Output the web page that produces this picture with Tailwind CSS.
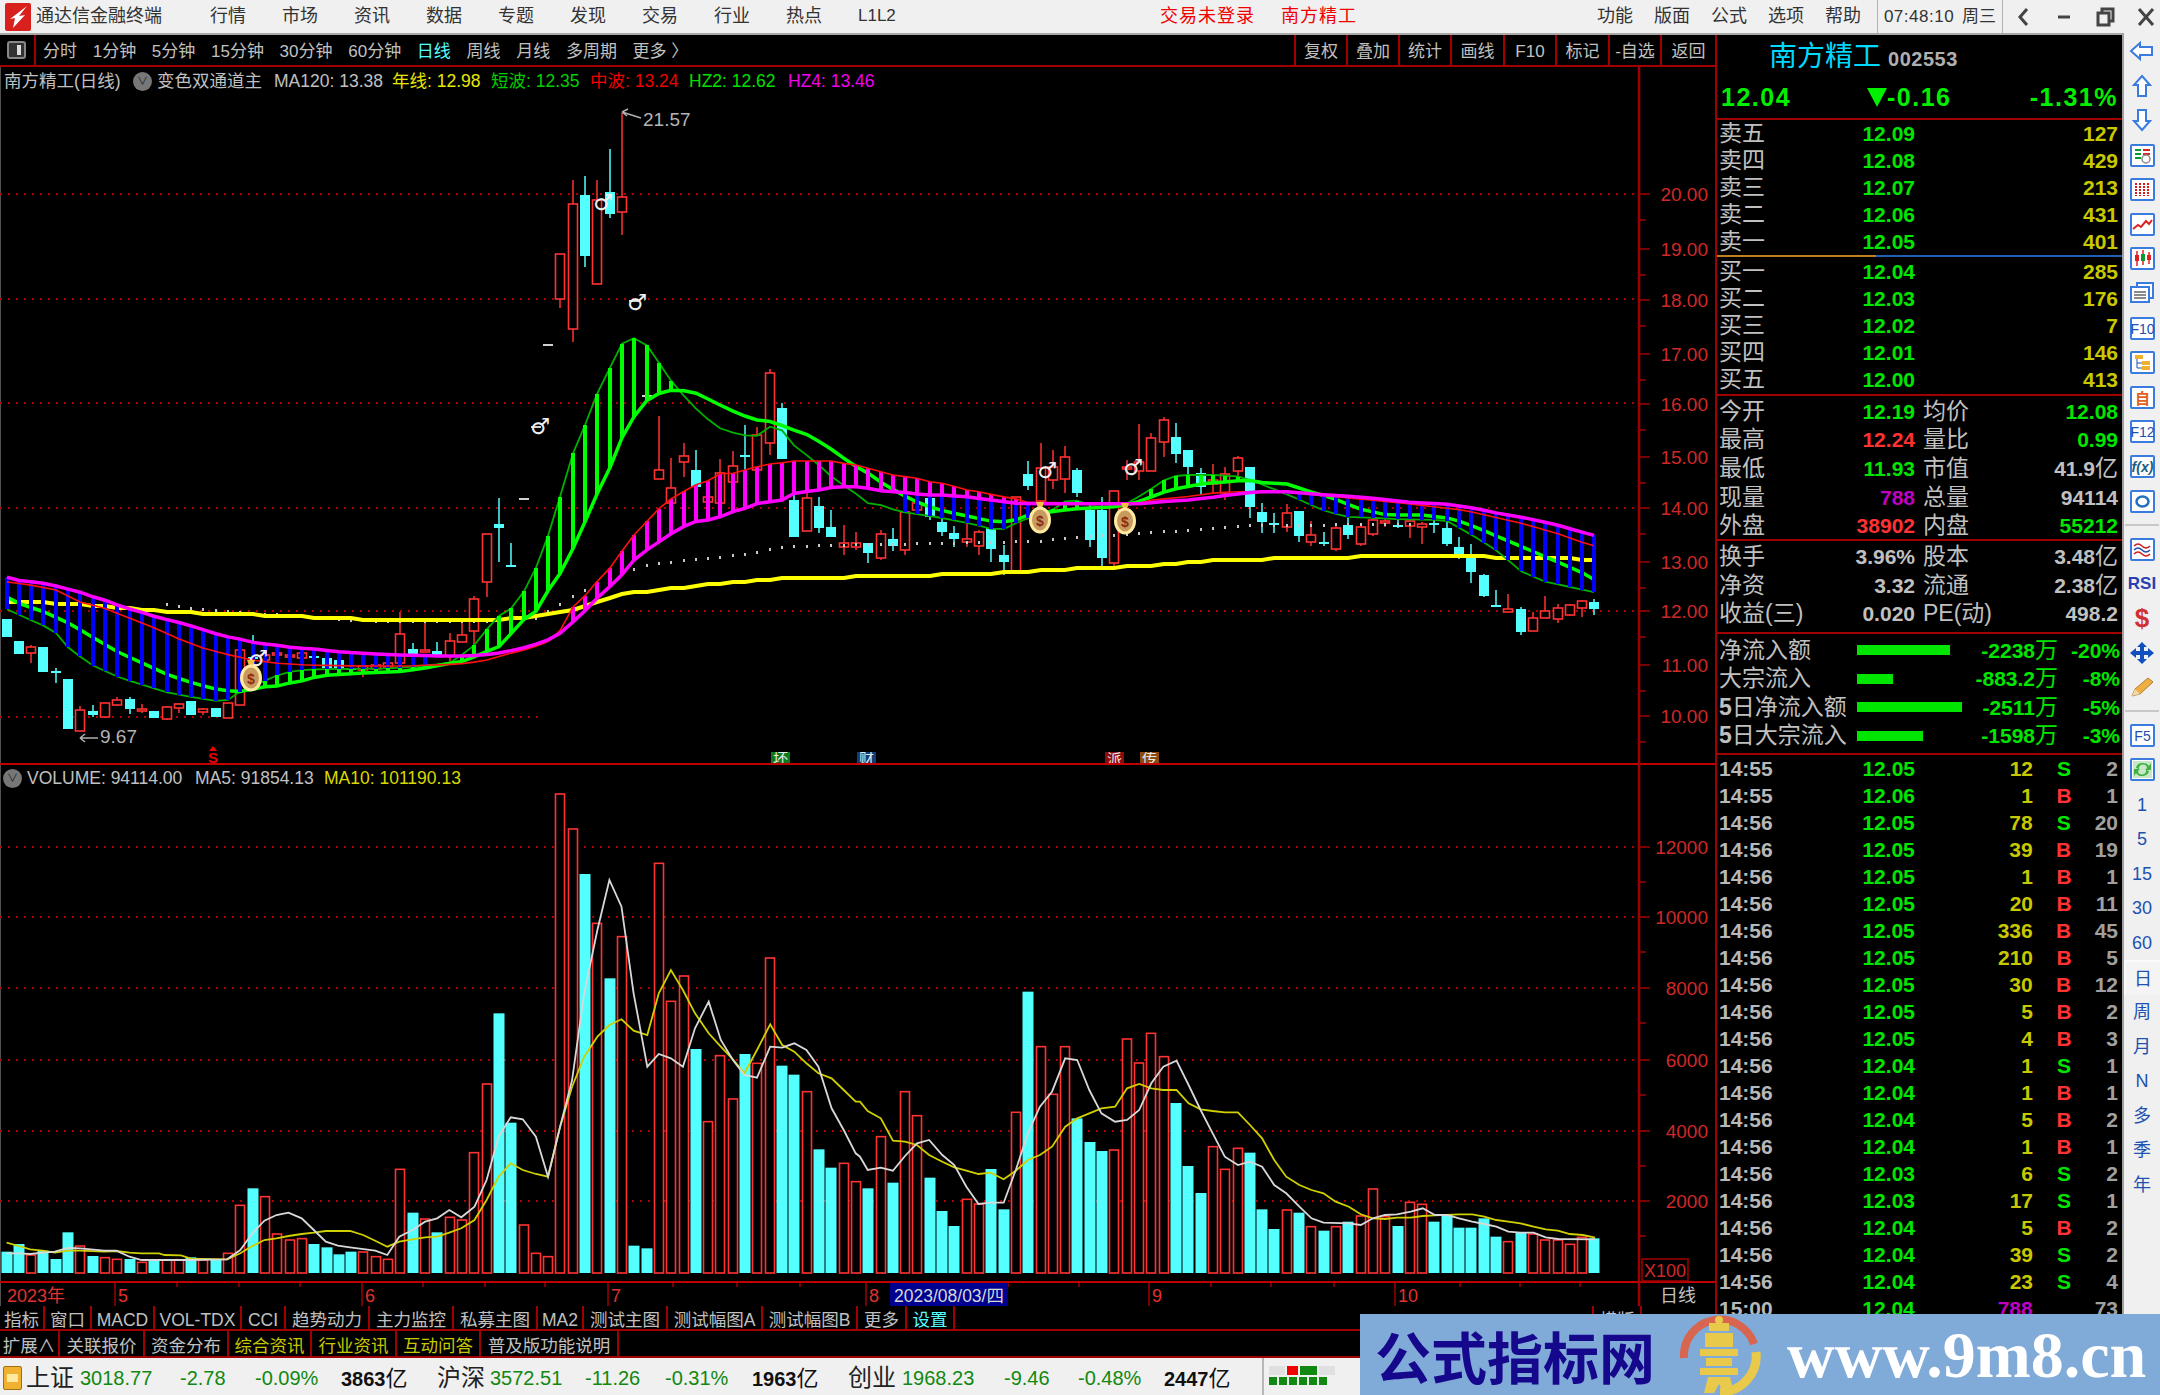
<!DOCTYPE html>
<html lang="zh-CN">
<head>
<meta charset="UTF-8">
<title>通达信金融终端</title>
<script src="https://cdn.jsdelivr.net/npm/@tailwindcss/browser@4"></script>
</head>
<body class="bg-black overflow-hidden font-['Liberation_Sans','Noto_Sans_CJK_SC',sans-serif]">
<div class="relative w-[2160px] h-[1395px] flex flex-col overflow-hidden">

  <!-- title bar -->
  <div class="h-[35px] shrink-0 bg-[#f0f0f0] border-b-2 border-[#a8a8a8] flex items-center text-[18px] text-[#333] whitespace-nowrap">
    <svg class="ml-[5px] w-[26px] h-[28px] shrink-0" viewBox="0 0 26 28"><rect width="26" height="28" rx="2" fill="#d8201c"/><path d="M22 3 L14 13 L20 12 L8 25 L10 15 L5 16 Z" fill="#fff"/></svg>
    <span class="ml-[5px] w-[174px] shrink-0">通达信金融终端</span>
    <div class="flex gap-[36px] shrink-0">
      <span>行情</span><span>市场</span><span>资讯</span><span>数据</span><span>专题</span><span>发现</span><span>交易</span><span>行业</span><span>热点</span><span class="text-[17px] w-[36px]">L1L2</span>
    </div>
    <span class="ml-[266px] text-[#f00000] w-[121px] shrink-0 tracking-[1px]">交易未登录</span>
    <span class="text-[#f00000] tracking-[1px] shrink-0">南方精工</span>
    <div class="ml-[240px] flex gap-[21px] shrink-0">
      <span>功能</span><span>版面</span><span>公式</span><span>选项</span><span>帮助</span>
    </div>
    <div class="ml-[16px] h-[33px] w-[126px] shrink-0 border-x border-[#b0b0b0] flex items-center justify-center gap-[8px] text-[17px]"><span class="tracking-[0.5px]">07:48:10</span><span>周三</span></div>
    <svg class="ml-[7px] w-[150px] h-[28px] shrink-0" viewBox="0 0 150 28" fill="none" stroke="#444" stroke-width="3"><path d="M17 6 L10 14 L17 22"/><path d="M48 14 H60"/><rect x="88" y="10" width="11" height="12"/><path d="M92 10 V6 H103 V18 H99"/><path d="M129 6 L143 22 M143 6 L129 22"/></svg>
  </div>

  <div class="flex flex-1 min-h-0">
    <!-- chart column -->
    <div class="w-[1715px] shrink-0 flex flex-col bg-black">
      <div class="h-[32px] shrink-0 border-b-2 border-[#a00000] flex items-center text-[17px] text-[#c0c0c0] whitespace-nowrap">
        <div class="w-[36px] h-full border-r-2 border-[#a00000] flex items-center justify-center">
          <svg class="w-[20px] h-[20px]" viewBox="0 0 20 20"><rect x="1" y="2" width="17" height="16" rx="2" fill="#333" stroke="#888" stroke-width="2"/><rect x="10" y="5" width="4" height="10" fill="#ddd"/></svg>
        </div>
        <div class="ml-[7px] pt-[4px] flex gap-[15.7px]">
          <span>分时</span><span>1分钟</span><span>5分钟</span><span>15分钟</span><span>30分钟</span><span>60分钟</span><span class="text-[#54ffff]">日线</span><span>周线</span><span>月线</span><span>多周期</span><span>更多 〉</span>
        </div>
        <div class="ml-auto flex h-full">
          <span class="w-[52px] pt-[4px] border-l-2 border-[#a00000] flex items-center justify-center">复权</span>
          <span class="w-[52px] pt-[4px] border-l-2 border-[#a00000] flex items-center justify-center">叠加</span>
          <span class="w-[52px] pt-[4px] border-l-2 border-[#a00000] flex items-center justify-center">统计</span>
          <span class="w-[53px] pt-[4px] border-l-2 border-[#a00000] flex items-center justify-center">画线</span>
          <span class="w-[52px] pt-[4px] border-l-2 border-[#a00000] flex items-center justify-center">F10</span>
          <span class="w-[53px] pt-[4px] border-l-2 border-[#a00000] flex items-center justify-center">标记</span>
          <span class="w-[52px] pt-[4px] border-l-2 border-[#a00000] flex items-center justify-center">-自选</span>
          <span class="w-[55px] pt-[4px] border-l-2 border-[#a00000] flex items-center justify-center">返回</span>
        </div>
      </div>

      <div class="relative h-[1239px] shrink-0">
        <svg id="chart" class="block absolute left-0 top-0" width="1715" height="1239" viewBox="0 67 1715 1239" font-family="'Liberation Sans','Noto Sans CJK SC',sans-serif"></svg>
        <!-- main pane legend -->
        <div class="absolute left-[4px] top-[3px] flex items-center h-[22px] text-[17.5px] text-[#c0c0c0] whitespace-nowrap">
          <span class="w-[126px]">南方精工(日线)</span>
          <span class="ml-[3px] w-[19px] h-[19px] rounded-full bg-[#777] flex items-center justify-center text-[#222] text-[11px]">∨</span>
          <span class="ml-[5px] w-[110px]">变色双通道主</span>
          <span class="ml-[7px] w-[118px]">MA120: 13.38</span>
          <span class="w-[99px] text-[#e8e800]">年线: 12.98</span>
          <span class="w-[99px] text-[#00d000]">短波: 12.35</span>
          <span class="w-[99px] text-[#f00000]">中波: 13.24</span>
          <span class="w-[99px] text-[#00e000]">HZ2: 12.62</span>
          <span class="text-[#f000f0]">HZ4: 13.46</span>
        </div>
        <!-- volume pane legend -->
        <div class="absolute left-[3px] top-[700px] flex items-center h-[22px] text-[17.5px] text-[#c0c0c0] whitespace-nowrap">
          <span class="w-[19px] h-[19px] rounded-full bg-[#777] flex items-center justify-center text-[#222] text-[11px]">∨</span>
          <span class="ml-[5px] w-[168px]">VOLUME: 94114.00</span>
          <span class="w-[129px]">MA5: 91854.13</span>
          <span class="text-[#d8d800]">MA10: 101190.13</span>
        </div>
      </div>

      <div class="h-[25px] shrink-0 border-b-2 border-[#a00000] flex text-[17.5px] text-[#c0c0c0] leading-none whitespace-nowrap [&>span]:pt-[6px]">
        <span class="w-[45px] border-r-2 border-[#a00000] flex items-center justify-center">指标</span>
        <span class="w-[47px] border-r-2 border-[#a00000] flex items-center justify-center">窗口</span>
        <span class="w-[63px] border-r-2 border-[#a00000] flex items-center justify-center">MACD</span>
        <span class="w-[87px] border-r-2 border-[#a00000] flex items-center justify-center">VOL-TDX</span>
        <span class="w-[44px] border-r-2 border-[#a00000] flex items-center justify-center">CCI</span>
        <span class="w-[84px] border-r-2 border-[#a00000] flex items-center justify-center">趋势动力</span>
        <span class="w-[84px] border-r-2 border-[#a00000] flex items-center justify-center">主力监控</span>
        <span class="w-[84px] border-r-2 border-[#a00000] flex items-center justify-center">私募主图</span>
        <span class="w-[46px] border-r-2 border-[#a00000] flex items-center justify-center">MA2</span>
        <span class="w-[84px] border-r-2 border-[#a00000] flex items-center justify-center">测试主图</span>
        <span class="w-[95px] border-r-2 border-[#a00000] flex items-center justify-center">测试幅图A</span>
        <span class="w-[95px] border-r-2 border-[#a00000] flex items-center justify-center">测试幅图B</span>
        <span class="w-[49px] border-r-2 border-[#a00000] flex items-center justify-center">更多</span>
        <span class="w-[48px] border-r-2 border-[#a00000] flex items-center justify-center text-[#54ffff]">设置</span>
        <span class="ml-auto w-[48px] border-l-2 border-[#a00000] flex items-center justify-center">横版</span>
        <span class="w-[75px] border-l-2 border-[#a00000]"></span>
      </div>
      <div class="h-[27px] shrink-0 border-b-2 border-[#a00000] flex text-[17.5px] text-[#c0c0c0] leading-none whitespace-nowrap [&>span]:pt-[6px]">
        <span class="w-[60px] border-r-2 border-[#a00000] flex items-center justify-center">扩展∧</span>
        <span class="w-[85px] border-r-2 border-[#a00000] flex items-center justify-center">关联报价</span>
        <span class="w-[84px] border-r-2 border-[#a00000] flex items-center justify-center">资金分布</span>
        <span class="w-[83px] border-r-2 border-[#a00000] flex items-center justify-center text-[#c8c800]">综合资讯</span>
        <span class="w-[85px] border-r-2 border-[#a00000] flex items-center justify-center text-[#c8c800]">行业资讯</span>
        <span class="w-[84px] border-r-2 border-[#a00000] flex items-center justify-center text-[#c8c800]">互动问答</span>
        <span class="w-[138px] border-r-2 border-[#a00000] flex items-center justify-center">普及版功能说明</span>
      </div>
    </div>

    <!-- quote panel -->
    <div class="w-[407px] shrink-0 border-l-2 border-[#a00000] bg-black overflow-hidden text-[#c0c0c0]">
      <div class="h-[85px] border-b-2 border-[#a00000] relative">
        <div class="h-[43px] pl-[52px] flex items-center">
          <span class="text-[28px] text-[#00d8ff] leading-none">南方精工</span>
          <span class="ml-[7px] mt-[4px] text-[20px] font-bold tracking-[0.5px] text-[#b0b0b0] leading-none">002553</span>
        </div>
        <div class="h-[38px] flex items-center text-[25px] font-bold text-[#00f000] tracking-[1.5px] leading-none">
          <span class="ml-[4px] w-[146px]">12.04</span>
          <span class="flex items-center"><span class="w-0 h-0 border-x-[10px] border-x-transparent border-t-[19px] border-t-[#00f000]"></span>-0.16</span>
          <span class="ml-auto mr-[4px]">-1.31%</span>
        </div>
      </div>
      <div id="sell" class="h-[135px]"></div>
      <div class="h-[2px] flex"><div class="w-[159px] bg-[#c08020]"></div><div class="flex-1 bg-[#2060b0]"></div></div>
      <div id="buy" class="h-[139px] pt-[1px] border-b-2 border-[#a00000]"></div>
      <div id="info" class="h-[145px] pt-[1px] border-b-2 border-[#a00000]"></div>
      <div id="info2" class="h-[93px] pt-[1px] border-b-2 border-[#a00000]"></div>
      <div id="flow" class="h-[121px] pt-[2px] border-b-2 border-[#a00000]"></div>
      <div id="ticks"></div>
    </div>

    <!-- side toolbar -->
    <div id="side" class="flex-1 bg-[#f0f0f0] border-l-2 border-[#a0a0a0] flex flex-col items-center -mt-[2px] pt-[1px]"></div>
  </div>

  <!-- index status bar -->
  <div class="h-[37px] shrink-0 bg-[#f0f0f0] flex items-center text-[20px] text-[#118811] whitespace-nowrap [&>span]:pt-[3px]">
    <span class="ml-[3px] w-[23px]"><span class="block w-[19px] h-[24px] rounded-[2px] bg-[#f0b030] border border-[#a07010]"><span class="block mx-[3px] mt-[7px] h-[8px] bg-[#ffe9a0]"></span></span></span>
    <span class="w-[54px] text-[24px] text-[#222]">上证</span>
    <span class="w-[100px]">3018.77</span><span class="w-[75px]">-2.78</span><span class="w-[86px]">-0.09%</span>
    <span class="w-[96px] text-[#111]"><b>3863</b><span class="text-[22px]">亿</span></span>
    <span class="w-[53px] text-[24px] text-[#222]">沪深</span>
    <span class="w-[95px]">3572.51</span><span class="w-[80px]">-11.26</span><span class="w-[87px]">-0.31%</span>
    <span class="w-[96px] text-[#111]"><b>1963</b><span class="text-[22px]">亿</span></span>
    <span class="w-[54px] text-[24px] text-[#222]">创业</span>
    <span class="w-[102px]">1968.23</span><span class="w-[74px]">-9.46</span><span class="w-[86px]">-0.48%</span>
    <span class="w-[98px] text-[#111]"><b>2447</b><span class="text-[22px]">亿</span></span>
    <div class="h-full w-[100px] border-l-2 border-[#b8b8b8] pl-[5px] pt-[8px]">
      <div class="flex gap-[2px] h-[9px]"><i class="w-[16px] bg-[#e0e0e0]"></i><i class="w-[11px] bg-[#f00000]"></i><i class="w-[17px] bg-[#118811]"></i><i class="w-[16px] bg-[#e0e0e0]"></i></div>
      <div class="mt-[2px] flex gap-[2px] h-[8px]"><i class="w-[8px] bg-[#118811]"></i><i class="w-[8px] bg-[#118811]"></i><i class="w-[8px] bg-[#118811]"></i><i class="w-[8px] bg-[#118811]"></i><i class="w-[8px] bg-[#118811]"></i><i class="w-[8px] bg-[#118811]"></i></div>
    </div>
  </div>

  <!-- site watermark laid over the corner -->
  <div class="absolute left-[1360px] top-[1314px] w-[800px] h-[81px] bg-[#80aad8] flex items-center">
    <span class="ml-[15px] w-[300px] text-[56px] leading-none font-bold text-[#16088c] font-['Noto_Sans_CJK_SC',sans-serif]">公式指标网</span>
    <svg class="absolute left-[318px] top-0 w-[84px] h-[81px]" viewBox="0 0 84 81">
      <path d="M6 44 A36 36 0 0 1 76 30" fill="none" stroke="#d8654f" stroke-width="8"/>
      <path d="M78 38 A36 36 0 0 1 42 78" fill="none" stroke="#e9c94a" stroke-width="9"/>
      <circle cx="41" cy="6" r="4" fill="#e9c94a"/>
      <rect x="31" y="9" width="20" height="8" fill="#e9c94a"/><rect x="27" y="19" width="28" height="14" fill="#e9c94a"/><rect x="22" y="35" width="38" height="7" fill="#e9c94a"/><rect x="28" y="44" width="26" height="8" fill="#e9c94a"/><rect x="22" y="54" width="38" height="7" fill="#e9c94a"/><path d="M30 63 H52 L56 79 H46 L41 70 L36 79 H26 Z" fill="#e9c94a"/>
    </svg>
    <span class="absolute left-[427px] top-[3px] text-[66px] leading-[75px] font-bold text-white font-['Liberation_Serif',serif]">www.9m8.cn</span>
  </div>
</div>

<script>
// price chart and panels are filled from the day's data below
const RED = '#ff3232', CYAN = '#54ffff', GRID = '#a00000', AXIS = '#d02828';
const X = i => Math.round(6.5 + 12.31 * i);

// [kind, body top, body bottom, wick top, wick bottom] in pane pixels
const candles = [
['c',619,637,619,637],['c',641,654,641,654],['r',647,653,645,663],['c',647,672,647,672],['c',671,673,668,683],
['c',679,729,679,729],['r',710,731,706,731],['c',711,715,705,717],['r',703,717,703,717],['r',700,705,697,706],
['c',699,709,697,714],['r',709,711,704,713],['c',711,718,711,718],['r',707,719,706,720],['r',704,708,703,713],
['c',701,715,701,715],['r',709,712,708,715],['c',708,717,708,717],['r',703,718,703,718],['r',650,705,650,705],
['c',657,659,635,665],['r',655,660,642,665],['r',653,655,650,665],['r',655,657,648,660],['r',653,658,647,660],
['c',656,657,654,660],['c',658,668,652,670],['c',660,668,655,670],['c',668,669,664,671],['r',666,670,666,677],
['r',665,669,662,672],['r',663,667,660,670],['r',634,663,612,663],['c',649,655,643,658],['r',650,652,620,652],
['c',651,655,642,655],['r',641,656,633,663],['r',635,642,623,642],['r',599,631,596,655],['r',534,582,534,597],
['c',524,528,498,562],['c',565,566,543,567],['w',498],['w',426],['w',344],
['r',254,299,254,308],['r',204,329,180,342],['c',195,256,176,267],['r',200,284,180,284],['c',192,214,149,218],
['r',197,212,113,235],['w',300],['w',395],['r',470,479,416,479],['r',488,503,458,503],
['r',456,462,443,477],['c',470,487,450,487],['r',497,502,495,505],['r',473,503,459,503],['r',466,482,451,482],
['c',455,457,425,470],['r',435,470,427,470],['r',373,443,369,455],['c',408,459,403,459],['c',500,537,495,537],
['r',498,531,493,531],['c',506,528,497,533],['c',527,537,510,537],['r',543,547,525,555],['r',543,547,532,550],
['c',543,553,543,563],['r',534,558,530,560],['c',539,546,528,551],['r',512,550,505,555],['r',503,510,500,515],
['c',498,517,490,520],['c',522,532,515,536],['c',533,539,526,547],['r',539,542,522,547],['r',532,546,530,555],
['c',528,549,517,562],['c',555,562,545,575],['r',497,571,497,571],['c',474,486,461,490],['r',468,501,443,505],
['r',467,480,450,489],['r',457,479,446,493],['c',470,493,468,497],['c',510,540,505,547],['c',510,558,497,567],
['r',491,563,491,567],['r',467,469,460,480],['r',462,471,424,480],['r',438,471,433,471],['r',420,442,417,457],
['c',437,454,423,463],['c',450,467,450,475],['c',473,487,468,495],['r',480,484,464,493],['r',474,493,467,500],
['r',458,471,456,480],['c',467,507,467,518],['c',512,522,503,533],['c',523,524,513,533],['r',513,527,504,532],
['c',511,536,511,542],['r',535,542,521,546],['c',542,543,532,546],['r',528,549,526,551],['c',525,535,518,539],
['r',527,544,525,546],['r',520,534,515,536],['r',521,523,516,527],['c',525,526,520,528],['r',521,526,519,538],
['r',524,527,522,544],['c',523,524,520,533],['c',528,544,522,546],['c',547,555,537,559],['c',557,572,544,583],
['c',575,596,574,597],['c',605,606,590,607],['r',609,612,594,612],['c',609,632,607,635],['r',618,631,612,631],
['r',611,618,596,618],['r',608,619,604,623],['r',605,615,604,616],['r',601,608,600,617],['c',602,609,599,615]];

// volume bars: colour and top, all resting on y=1273
const volR = [1415,1392,1425,1412,1437,1357,1398,1428,1433,1438,1437,1447,1438,1440,1440,1432,1440,1438,1420,1276,1225,1250,1362,1380,1376,1392,1402,1423,1415,1416,1430,1438,1168,1298,1317,1357,1312,1320,1118,912,700,1028,1335,1420,1430,42,147,282,430,595,470,1397,1405,250,664,588,807,1025,827,957,822,850,534,857,884,935,1108,1163,1150,1205,1225,1070,1208,935,1007,1193,1293,1338,1258,1272,1167,1288,997,635,800,943,800,1015,1086,1113,1110,777,849,760,830,969,1158,1239,1100,1168,1105,1118,1288,1347,1290,1298,1340,1352,1340,1325,1308,1227,1310,1338,1267,1273,1325,1305,1343,1343,1315,1370,1385,1358,1362,1380,1380,1393,1372,1375];
const volC = 'ccrcccrcrr' + 'crcrrcrcrr' + 'crrrrccccr' + 'rrrcrcrrrr' + 'ccrrrrrcrc' + 'rccrrrcrrr' + 'crrccrccrr' + 'crcrrcccrr' + 'ccrcrrrccc' + 'rrrrrcccrr' + 'rcccrcrcrc' + 'rrrcrrcccc' + 'ccrcrrrrrc';

// readings per crop -> pane pixels
const a7 = p => p.map(([x, v]) => [x / 1.96, 540 + v / 3]);
const a8 = p => p.map(([x, v]) => [700 + x / 1.704, 340 + v / 3]);
const a11 = p => p.map(([x, v]) => [480 + x / 3, 90 + v / 3]);
const v9 = p => p.map(([x, v]) => [x / 1.823, 780 + v / 3]);
const v10 = p => p.map(([x, v]) => [860 + x / 1.823, 780 + v / 3]);
const at = (s, x) => {
  if (x <= s[0][0]) return s[0][1];
  for (let k = 1; k < s.length; k++) if (x <= s[k][0]) {
    const [x0, y0] = s[k - 1], [x1, y1] = s[k];
    return y0 + (y1 - y0) * (x - x0) / (x1 - x0);
  }
  return s[s.length - 1][1];
};

const M = [...a7([[10,110],[30,120],[60,125],[85,130],[110,138],[135,148],[160,158],[185,172],[205,180],[230,195],[255,207],[280,218],[305,230],[330,240],[350,247],[375,258],[400,270],[425,282],[450,292],[470,297],[495,307],[520,312],[545,316],[570,322],[595,325],[620,327],[645,332],[670,336],[690,338],[715,340],[740,342],[765,344],[790,345],[815,346],[840,347],[865,348],[915,348],[940,345],[965,343],[990,335],[1015,328],[1040,318],[1065,305],[1090,290],[1120,250],[1145,215],[1170,175],[1195,140]]),
  ...a11([[425,1455],[462,1410],[500,1380],[538,1355],[575,1330],[610,1310],[645,1295],[685,1290],[722,1280],[758,1265],[795,1255],[833,1240],[870,1235],[906,1230],[943,1210],[980,1205],[1016,1200],[1055,1192],[1090,1190],[1128,1190],[1165,1195]]),
  ...a8([[308,452],[329,455],[350,458],[372,462],[392,465],[413,465],[435,468],[455,470],[475,475],[495,480],[516,485],[540,490],[570,491],[750,491],[770,488],[790,485],[830,480],[870,473],[900,465],[950,455],[1000,455],[1045,462],[1100,468],[1160,477],[1210,487],[1270,492],[1320,505],[1360,520],[1410,535],[1460,555],[1500,575],[1525,587]])];
const R = [...a7([[10,125],[60,135],[110,150],[155,185],[205,205],[255,235],[305,265],[355,300],[400,325],[450,345],[495,360],[545,370],[600,375],[700,378],[800,378],[900,372],[950,362],[1000,340],[1040,325],[1090,295],[1120,205],[1145,170],[1170,125],[1195,85],[1218,35]]),
  ...a11([[462,1335],[500,1295],[538,1255],[575,1225],[610,1205],[645,1185],[685,1172],[722,1150],[758,1150],[795,1140],[833,1130],[870,1122],[906,1118],[943,1113],[1055,1113],[1090,1120],[1128,1125],[1165,1135]]),
  ...a8([[308,395],[329,405],[350,410],[372,415],[392,425],[413,430],[435,440],[455,450],[475,455],[495,463],[516,470],[540,477],[555,487],[750,490],[770,480],[830,470],[880,458],[920,455],[1000,455],[1050,465],[1100,473],[1200,490],[1300,510],[1400,550],[1460,580],[1520,617]])];
const T = [...a7([[10,205],[60,240],[105,270],[135,325],[180,375],[230,410],[280,435],[330,458],[380,472],[440,487],[470,455],[545,405],[570,395],[595,390],[620,388],[770,385],[880,370],[905,345],[930,315],[953,270],[978,228],[1002,205],[1025,160],[1050,85]]),
  ...a11([[205,1335],[240,1220],[277,1095],[313,1010],[352,910],[389,835],[425,762],[462,745],[502,767],[538,820],[575,875],[590,890],[630,940],[680,985],[720,1015],[780,1035],[830,1038],[870,1010],[905,1020],[945,1070],[1000,1110],[1060,1165],[1120,1205],[1165,1240]]),
  ...a8([[300,490],[340,515],[400,530],[460,550],[510,573],[550,540],[600,510],[620,485],[640,480],[660,495],[730,490],[770,445],[800,410],[830,405],[880,405],[920,410],[960,435],[1010,470],[1060,510],[1100,530],[1200,538],[1270,540],[1320,590],[1360,635],[1400,695],[1440,725],[1480,740],[1525,757]])];
const G = [...a7([[10,168],[40,192],[85,215],[135,250],[180,290],[230,335],[280,370],[330,405],[380,430],[430,450],[470,455],[520,440],[545,438],[570,428],[595,422],[620,410],[645,405],[700,400],[780,395],[830,385],[880,370],[905,365],[930,350],[953,335],[978,320],[1002,280],[1025,240],[1050,215],[1075,150],[1098,100]]),
  ...a11([[277,1380],[313,1300],[352,1210],[389,1135],[425,1045],[462,980],[502,930],[538,910],[575,900],[600,900],[650,910],[700,935],[750,960],[800,980],[840,993],[880,995],[925,1015],[985,1035],[1050,1075],[1120,1125],[1165,1150],[1200,1175]]),
  ...a8([[340,460],[380,495],[420,515],[460,530],[500,545],[530,545],[560,525],[590,518],[620,510],[650,505],[700,502],[740,490],[770,470],[800,450],[830,440],[860,430],[900,425],[930,420],[960,428],[1000,432],[1040,455],[1080,475],[1120,505],[1170,525],[1230,525],[1280,535],[1320,560],[1360,590],[1400,620],[1460,665],[1500,695],[1525,720]])];
const Y = [...a7([[10,183],[100,188],[200,200],[300,212],[400,220],[560,228],[660,235],[780,240],[970,240],[1020,235],[1080,222],[1130,205],[1180,178],[1230,160],[1300,150],[1372,135]]),
  ...a8([[140,715],[330,708],[470,702],[560,695],[640,685],[730,680],[875,662],[1000,655],[1150,650],[1250,645],[1320,650],[1525,658]])];
const D = [...a7([[150,147],[200,158],[250,170],[300,183],[350,195],[420,208],[490,215],[560,222],[640,232],[740,240],[860,240],[1000,240],[1050,230],[1095,190],[1140,150],[1260,72]]),
  ...a11([[497,1422],[640,1405],[790,1390],[900,1368],[1050,1362],[1140,1360]]),
  ...a8([[280,610],[420,605],[580,600],[620,590],[800,570],[940,553],[1100,550],[1250,548]])];

const white = [...v9([[12,1420],[34,1420],[55,1422],[78,1418],[100,1415],[124,1404],[146,1405],[190,1412],[212,1412],[236,1430],[258,1440],[340,1440],[414,1438],[438,1410],[460,1360],[482,1322],[504,1305],[526,1298],[550,1315],[572,1350],[594,1385],[616,1397],[638,1402],[684,1412],[706,1425],[728,1370],[752,1350],[775,1325],[797,1315],[819,1290],[841,1312],[865,1280],[887,1200],[909,1070],[931,1012],[953,1018],[977,1070],[999,1190],[1021,1040],[1043,900],[1065,640],[1089,450],[1111,300],[1133,380],[1155,640],[1180,860],[1201,822],[1223,835],[1245,860],[1267,745],[1292,665],[1314,780],[1336,840],[1357,885],[1380,893],[1404,800],[1426,803],[1448,790],[1470,810],[1492,860],[1516,985],[1538,1050],[1560,1120]]),
  ...v10([[0,1130],[14,1170],[38,1163],[60,1172],[82,1128],[104,1090],[126,1080],[150,1125],[172,1155],[194,1220],[216,1272],[238,1268],[262,1268],[284,1170],[306,1060],[328,980],[350,935],[374,835],[396,840],[418,930],[440,1000],[465,1025],[487,1020],[509,990],[531,910],[553,860],[577,842],[599,915],[621,990],[643,1060],[665,1130],[689,1155],[711,1145],[733,1160],[755,1215],[777,1240],[801,1280],[823,1315],[845,1328],[891,1330],[913,1335],[935,1315],[957,1305],[979,1303],[1004,1295],[1026,1285],[1048,1305],[1070,1305],[1092,1315],[1116,1325],[1138,1332],[1160,1340],[1182,1355],[1204,1358],[1228,1358],[1250,1372],[1272,1377],[1340,1378]])];
const yellow = [...v9([[12,1388],[34,1398],[55,1408],[78,1412],[100,1418],[124,1412],[146,1412],[190,1415],[212,1413],[236,1418],[258,1420],[290,1420],[300,1425],[330,1426],[348,1436],[414,1438],[438,1420],[460,1398],[482,1380],[504,1375],[526,1368],[550,1362],[572,1358],[594,1353],[638,1353],[662,1365],[684,1382],[706,1400],[728,1385],[752,1378],[775,1372],[797,1370],[819,1358],[841,1345],[865,1320],[887,1260],[909,1190],[931,1150],[953,1170],[977,1182],[999,1190],[1021,1040],[1043,920],[1065,830],[1089,770],[1111,735],[1133,718],[1155,752],[1180,765],[1201,640],[1223,570],[1245,630],[1267,700],[1292,760],[1314,800],[1336,838],[1357,880],[1380,810],[1404,733],[1426,795],[1448,815],[1470,850],[1492,880],[1516,895],[1538,930],[1560,965]]),
  ...v10([[0,965],[14,993],[38,1015],[60,1082],[82,1085],[104,1095],[126,1125],[150,1145],[172,1162],[194,1172],[216,1182],[238,1178],[262,1198],[284,1172],[306,1140],[328,1125],[350,1100],[374,1040],[396,1015],[418,1000],[440,985],[465,980],[487,925],[509,912],[531,925],[553,930],[577,930],[599,970],[621,988],[643,993],[665,997],[689,997],[711,1035],[733,1075],[755,1140],[777,1190],[801,1215],[823,1230],[845,1240],[867,1265],[891,1280],[913,1303],[935,1315],[957,1317],[979,1313],[1004,1313],[1026,1308],[1048,1306],[1092,1303],[1116,1303],[1138,1310],[1160,1320],[1182,1325],[1204,1330],[1228,1340],[1250,1348],[1272,1352],[1294,1362],[1318,1365],[1340,1373]])];

let s = '';
const line = (x1, y1, x2, y2, c, w = 1) => `<line x1="${x1}" y1="${y1}" x2="${x2}" y2="${y2}" stroke="${c}" stroke-width="${w}"/>`;
const poly = (pts, c, w) => `<polyline points="${pts.map(p => p[0].toFixed(1) + ',' + p[1].toFixed(1)).join(' ')}" fill="none" stroke="${c}" stroke-width="${w}"/>`;
const dotted = (y, x2) => `<line x1="0" y1="${y}" x2="${x2}" y2="${y}" stroke="#b00000" stroke-width="2" stroke-dasharray="2 6"/>`;
const txt = (x, y, t, c, size, anchor = 'start', extra = '') => `<text x="${x}" y="${y}" fill="${c}" font-size="${size}" text-anchor="${anchor}" dominant-baseline="central" ${extra}>${t}</text>`;

s += line(0.5, 67, 0.5, 1306, '#505050', 1);
// grids
[194, 299, 403, 508, 611].forEach(y => s += dotted(y, 1639));
s += dotted(717, 538);
[847, 917, 988, 1060, 1131, 1201].forEach(y => s += dotted(y, 1639));

// candles sit underneath the channel overlays
candles.forEach((k, i) => {
  const x = X(i);
  if (k[0] === 'w') { s += `<rect x="${x - 5}" y="${k[1]}" width="10" height="2" fill="#d0d0d0"/>`; return; }
  const c = k[0] === 'r' ? RED : CYAN;
  s += line(x, k[3], x, k[4], c, 1.5);
  if (k[0] === 'r') s += `<rect x="${x - 4.5}" y="${k[1]}" width="9" height="${Math.max(k[2] - k[1], 2)}" fill="#000" stroke="${c}" stroke-width="1.6"/>`;
  else s += `<rect x="${x - 5}" y="${k[1]}" width="10" height="${Math.max(k[2] - k[1], 2)}" fill="${c}"/>`;
});

// white dots of MA120
for (let i = 13; i < 115; i++) s += `<rect x="${X(i) - 1}" y="${at(D, X(i)).toFixed(0)}" width="2" height="3" fill="#c8c8c8"/>`;

const series = a => Array.from({ length: 130 }, (_, i) => [X(i), at(a, X(i))]);
s += poly(Array.from({ length: 130 }, (_, i) => [X(i), Math.round(at(Y, X(i)) / 2) * 2]), '#ffff00', 4);
s += poly(series(T), '#00b000', 1.8);
s += poly(series(G), '#00ff00', 3.5);

// sticks between channel edges
const stick = (i, a, b, c) => `<line x1="${X(i)}" y1="${at(a, X(i)).toFixed(0)}" x2="${X(i)}" y2="${at(b, X(i)).toFixed(0)}" stroke="${c}" stroke-width="4" shape-rendering="crispEdges"/>`;
for (let i = 45; i <= 82; i++) s += stick(i, R, M, '#ff00ff');
for (let i = 21; i <= 54; i++) s += stick(i, T, G, '#00ff00');
for (const i of [85, 86, 87, 93, 94, 95, 96, 97, 98, 99, 100]) s += stick(i, T, G, '#00ff00');
for (let i = 0; i <= 34; i++) s += stick(i, M, T, '#0000ff');
for (const i of [73, 74, 75, 76, 77, 78, 79, 80, 81, 82, 83, 88, 89, 90]) s += stick(i, M, T, '#0000ff');
for (let i = 104; i <= 129; i++) s += stick(i, M, T, '#0000ff');

s += poly(series(R), '#ff1010', 1.6);
s += poly(series(M), '#ff00ff', 3.5);

// signal markers
[[637, 302], [540, 426], [603, 202], [258, 658], [1047, 470], [1133, 467]].forEach(([x, y]) => {
  s += `<text x="${x}" y="${y}" fill="#f0f0f0" font-size="22" text-anchor="middle" dominant-baseline="central" font-family="'DejaVu Sans'">♂</text>`;
});
[[251, 677], [1040, 519], [1125, 520]].forEach(([x, y]) => {
  s += `<path d="M${x - 4} ${y - 17} h8 l-2 6 h-4 z" fill="#f0c040"/><ellipse cx="${x}" cy="${y + 1}" rx="9.5" ry="12" fill="#c89a60" stroke="#ffe9a0" stroke-width="3"/>`;
  s += txt(x, y + 2, '$', '#8a2a10', 14, 'middle', 'font-weight="bold"');
});
s += `<path d="M641 118 L622 112 M622 112 L628 109 M622 112 L627 116" stroke="#b0b0b0" fill="none" stroke-width="1.5"/>`;
s += txt(643, 119, '21.57', '#b4b4b4', 19);
s += `<path d="M98 738 H80 M80 738 L85 734 M80 738 L85 742" stroke="#b0b0b0" fill="none" stroke-width="1.5"/>`;
s += txt(100, 736, '9.67', '#b4b4b4', 19);
s += `<path d="M213 746 l4 5 h-8 z" fill="#f00000"/>`;
s += txt(213, 757, 'S', '#f00000', 15, 'middle', 'font-weight="bold"');
[[771, '#0b7a1c', '坏'], [857, '#123d70', '财'], [1105, '#8c0a0a', '派'], [1140, '#8a4a10', '传']].forEach(([x, c, t]) => {
  s += `<rect x="${x}" y="752" width="19" height="11" fill="${c}"/>`;
  s += `<svg x="${x}" y="752" width="19" height="11" viewBox="0 0 19 11">${txt(9.5, 6, t, '#e8e8e8', 15, 'middle')}</svg>`;
});

// volume bars
volR.forEach((v, i) => {
  const x = X(i), y = 780 + v / 3;
  if (volC[i] === 'c') s += `<rect x="${x - 5.5}" y="${y}" width="11" height="${1273 - y}" fill="${CYAN}"/>`;
  else s += `<rect x="${x - 4.5}" y="${y}" width="9" height="${1273 - y}" fill="#000" stroke="${RED}" stroke-width="1.6"/>`;
});
s += poly(yellow, '#d0d000', 1.8);
s += poly(white, '#d8d8d8', 1.8);

// frame and axes
s += line(0, 764, 1715, 764, '#c00000', 2);
s += line(0, 1282, 1715, 1282, '#c00000', 2);
s += line(1639, 67, 1639, 1306, '#a00000', 2.5);
[[194, '20.00'], [249, '19.00'], [300, '18.00'], [354, '17.00'], [404, '16.00'], [457, '15.00'], [508, '14.00'], [562, '13.00'], [611, '12.00'], [665, '11.00'], [716, '10.00']].forEach(([y, t]) => {
  s += line(1640, y, 1650, y, GRID, 1.5) + txt(1708, y, t, AXIS, 19, 'end');
  s += line(1640, y + 26, 1646, y + 26, GRID, 1.5);
});
[[847, '12000'], [917, '10000'], [988, '8000'], [1060, '6000'], [1131, '4000'], [1201, '2000']].forEach(([y, t]) => {
  s += line(1640, y, 1650, y, GRID, 1.5) + txt(1708, y, t, AXIS, 19, 'end');
  s += line(1640, y + 35, 1646, y + 35, GRID, 1.5);
});
s += `<rect x="1642" y="1259" width="46" height="22" fill="none" stroke="#a00000" stroke-width="1.5"/>` + txt(1665, 1271, 'X100', AXIS, 18, 'middle');
s += txt(1678, 1296, '日线', '#c0c0c0', 18, 'middle');

// time axis
[115, 362, 608, 866, 1149, 1395].forEach(x => s += line(x, 1282, x, 1306, '#a00000', 1.5));
[177, 239, 300, 423, 485, 545, 673, 737, 800, 1008, 1079, 1211, 1271, 1334, 1460, 1520, 1580].forEach(x => s += line(x, 1283, x, 1287, '#a00000', 1.5));
s += `<rect x="890" y="1283" width="118" height="23" fill="#000090"/>` + txt(949, 1296, '2023/08/03/四', '#d8d8d8', 17.5, 'middle');
[[7, '2023年'], [118, '5'], [365, '6'], [611, '7'], [869, '8'], [1152, '9'], [1398, '10']].forEach(([x, t]) => s += txt(x, 1296, t, '#e03030', 18));
document.getElementById('chart').innerHTML = s;

// quote panel
const num = 'text-[21px] font-bold leading-none text-right';
const lab = 'text-[23px] leading-none';
const bookRow = (l, p, q) => `<div class="h-[27px] flex items-center pl-[2px] pr-[4px]"><span class="w-[120px] ${lab}">${l}</span><span class="w-[76px] ${num} text-[#00e600]">${p}</span><span class="flex-1 ${num} text-[#c8c800]">${q}</span></div>`;
document.getElementById('sell').innerHTML = [['卖五','12.09',127],['卖四','12.08',429],['卖三','12.07',213],['卖二','12.06',431],['卖一','12.05',401]].map(r => bookRow(...r)).join('');
document.getElementById('buy').innerHTML = [['买一','12.04',285],['买二','12.03',176],['买三','12.02',7],['买四','12.01',146],['买五','12.00',413]].map(r => bookRow(...r)).join('');

const GR = 'text-[#00e600]', WH = 'text-[#c0c0c0]', RD = 'text-[#ff3232]', PU = 'text-[#c000c0]';
const yi = '<span class="text-[23px] font-normal">亿</span>';
const infoRow = (h, l, p, pc, l2, v, vc) => `<div class="${h} flex items-center pl-[2px] pr-[4px]"><span class="w-[120px] ${lab}">${l}</span><span class="w-[76px] whitespace-nowrap ${num} ${pc}">${p}</span><span class="ml-[8px] w-[70px] ${lab}">${l2}</span><span class="flex-1 whitespace-nowrap ${num} ${vc}">${v}</span></div>`;
document.getElementById('info').innerHTML = [
  ['今开','12.19',GR,'均价','12.08',GR],['最高','12.24',RD,'量比','0.99',GR],['最低','11.93',GR,'市值','41.9'+yi,WH],
  ['现量','788',PU,'总量','94114',WH],['外盘','38902',RD,'内盘','55212',GR]].map(r => infoRow('h-[28.6px]', ...r)).join('');
document.getElementById('info2').innerHTML = [
  ['换手','3.96%',WH,'股本','3.48'+yi,WH],['净资','3.32',WH,'流通','2.38'+yi,WH],['收益(三)','0.020',WH,'PE(动)','498.2',WH]].map(r => infoRow('h-[28.7px]', ...r)).join('');

const flowRow = (l, w, v, p) => `<div class="h-[28.5px] flex items-center pl-[2px] pr-[2px]"><span class="w-[138px] whitespace-nowrap ${lab}">${l}</span><span class="w-[110px]"><span class="block h-[10px] bg-[#00e600]" style="width:${w}px"></span></span><span class="w-[91px] whitespace-nowrap ${num} ${GR}">${v}<span class="text-[23px] font-normal">万</span></span><span class="flex-1 ${num} ${GR}">${p}</span></div>`;
document.getElementById('flow').innerHTML = [['净流入额',93,'-2238','-20%'],['大宗流入',36,'-883.2','-8%'],['<b>5</b>日净流入额',105,'-2511','-5%'],['<b>5</b>日大宗流入',66,'-1598','-3%']].map(r => flowRow(...r)).join('');

const ticks = [['14:55','12.05',12,'S',2],['14:55','12.06',1,'B',1],['14:56','12.05',78,'S',20],['14:56','12.05',39,'B',19],['14:56','12.05',1,'B',1],['14:56','12.05',20,'B',11],['14:56','12.05',336,'B',45],['14:56','12.05',210,'B',5],['14:56','12.05',30,'B',12],['14:56','12.05',5,'B',2],['14:56','12.05',4,'B',3],['14:56','12.04',1,'S',1],['14:56','12.04',1,'B',1],['14:56','12.04',5,'B',2],['14:56','12.04',1,'B',1],['14:56','12.03',6,'S',2],['14:56','12.03',17,'S',1],['14:56','12.04',5,'B',2],['14:56','12.04',39,'S',2],['14:56','12.04',23,'S',4],['15:00','12.04',788,'',73]];
document.getElementById('ticks').innerHTML = ticks.map(([t, p, q, d, n]) => `<div class="h-[27px] flex items-center pl-[2px] pr-[4px] ${num}"><span class="w-[120px] text-left text-[#b8b8b8]">${t}</span><span class="w-[76px] ${GR}">${p}</span><span class="w-[118px] ${n === 73 ? PU : 'text-[#c8c800]'}">${q}</span><span class="w-[62px] text-center ${d === 'B' ? RD : GR}">${d}</span><span class="flex-1 text-[#a0a0a0]">${n}</span></div>`).join('');

// side toolbar icons
const box = inner => `<div class="h-[34.6px] flex items-center"><svg class="w-[25px] h-[23px]" viewBox="0 0 25 23"><rect x="1" y="1" width="23" height="21" rx="1" fill="#fff" stroke="#3a7be0" stroke-width="2"/>${inner}</svg></div>`;
const plain = inner => `<div class="h-[34.6px] flex items-center"><svg class="w-[26px] h-[24px]" viewBox="0 0 26 24">${inner}</svg></div>`;
const label = t => `<div class="h-[34.6px] flex items-center text-[18px] leading-none text-[#2050b0]">${t}</div>`;
const sep = '<div class="h-[13.4px] w-full flex items-center px-[1px]"><div class="h-[2px] w-full bg-[#c8c8c8]"></div></div>';
const arrow = 'fill="#fff" stroke="#3a7be0" stroke-width="2"';
document.getElementById('side').innerHTML = [
  plain(`<path d="M2 12 L11 4 V8 H23 V16 H11 V20 Z" ${arrow}/>`),
  plain(`<path d="M13 2 L21 11 H17 V22 H9 V11 H5 Z" ${arrow}/>`),
  plain(`<path d="M13 22 L21 13 H17 V2 H9 V13 H5 Z" ${arrow}/>`),
  box('<path d="M5 6 H11 M5 10 H11 M5 14 H11" stroke="#0a9a30" stroke-width="2"/><path d="M13 6 H20 M13 10 H20" stroke="#e02020" stroke-width="2"/><circle cx="16" cy="15" r="4" fill="none" stroke="#888" stroke-width="1.5"/>'),
  box('<path d="M6 5 V18 M10 5 V18 M14 5 V18 M18 5 V18" stroke="#d81818" stroke-width="2" stroke-dasharray="2 1"/>'),
  box('<path d="M3 16 L8 12 L11 14 L16 8 L19 11 L22 7" fill="none" stroke="#e02020" stroke-width="2"/>'),
  box('<path d="M7 4 V19 M13 3 V18 M19 5 V17" stroke="#e02020" stroke-width="1.5"/><rect x="5" y="8" width="4" height="6" fill="#e02020"/><rect x="11" y="7" width="4" height="7" fill="#0a9a30"/><rect x="17" y="8" width="4" height="5" fill="#e02020"/>'),
  plain('<rect x="8" y="2" width="16" height="15" fill="#fff" stroke="#3a7be0" stroke-width="2"/><rect x="2" y="6" width="18" height="15" fill="#fff" stroke="#3a7be0" stroke-width="2"/><path d="M5 11 H17 M5 14 H17 M5 17 H17" stroke="#666" stroke-width="1.5"/>'),
  box('<text x="12.5" y="17" font-size="14" text-anchor="middle" fill="#2050b0">F10</text>'),
  box('<rect x="5" y="4" width="8" height="4" fill="#f0b030"/><rect x="12" y="10" width="8" height="4" fill="#f0b030"/><rect x="12" y="15" width="8" height="4" fill="#f0b030"/><path d="M7 8 V17 H12 M7 12 H12" fill="none" stroke="#2050b0"/>'),
  box('<text x="12.5" y="18" font-size="15" text-anchor="middle" fill="#e06020" font-weight="bold">自</text>'),
  box('<text x="12.5" y="17" font-size="14" text-anchor="middle" fill="#2050b0">F12</text>'),
  box('<text x="12.5" y="17" font-size="14" text-anchor="middle" fill="#206080" font-style="italic" font-weight="bold">f(x)</text>'),
  box('<ellipse cx="12.5" cy="11.5" rx="6" ry="5" fill="none" stroke="#2070c0" stroke-width="2.5"/>'),
  sep,
  box('<path d="M4 8 Q8 4 12 8 T20 8" fill="none" stroke="#d02020" stroke-width="1.5"/><path d="M4 12 Q8 8 12 12 T20 12" fill="none" stroke="#2050b0" stroke-width="1.5"/><path d="M4 16 Q8 12 12 16 T20 16" fill="none" stroke="#d02020" stroke-width="1.5"/>'),
  `<div class="h-[34.6px] flex items-center text-[17px] font-bold leading-none text-[#2a3fb0]">RSI</div>`,
  `<div class="h-[34.6px] flex items-center text-[26px] font-bold leading-none text-[#d03030]">$</div>`,
  plain('<path d="M13 1 L18 6 H15 V10 H19 V7 L25 12 L19 17 V14 H15 V18 H18 L13 23 L8 18 H11 V14 H7 V17 L1 12 L7 7 V10 H11 V6 H8 Z" fill="#1050c0"/>'),
  plain('<path d="M3 21 L6 14 L19 3 L24 7 L11 19 Z" fill="#f0b040" stroke="#b08030"/><path d="M3 21 L6 14 L11 19 Z" fill="#eed8b0"/>'),
  sep,
  box('<text x="12.5" y="17" font-size="14" text-anchor="middle" fill="#2050b0">F5</text>'),
  box('<rect x="3" y="3" width="19" height="17" fill="#c8e8c8"/><path d="M6 10 A7 6 0 0 1 19 8 L21 5 V12 H15 L17 10 A4 4 0 0 0 9 11 Z M19 13 A7 6 0 0 1 6 15 L4 18 V11 H10 L8 13 A4 4 0 0 0 16 12 Z" fill="#40b040"/>'),
  label('1'), label('5'), label('15'), label('30'), label('60'),
  `<div class="h-[34.6px] w-full flex items-center justify-center border-l-2 border-t-2 border-[#fafafa] bg-[#f4f4f4] text-[18px] leading-none text-[#2050b0]">日</div>`,
  label('周'), label('月'), label('N'), label('多'), label('季'), label('年')
].join('');
</script>
</body>
</html>
